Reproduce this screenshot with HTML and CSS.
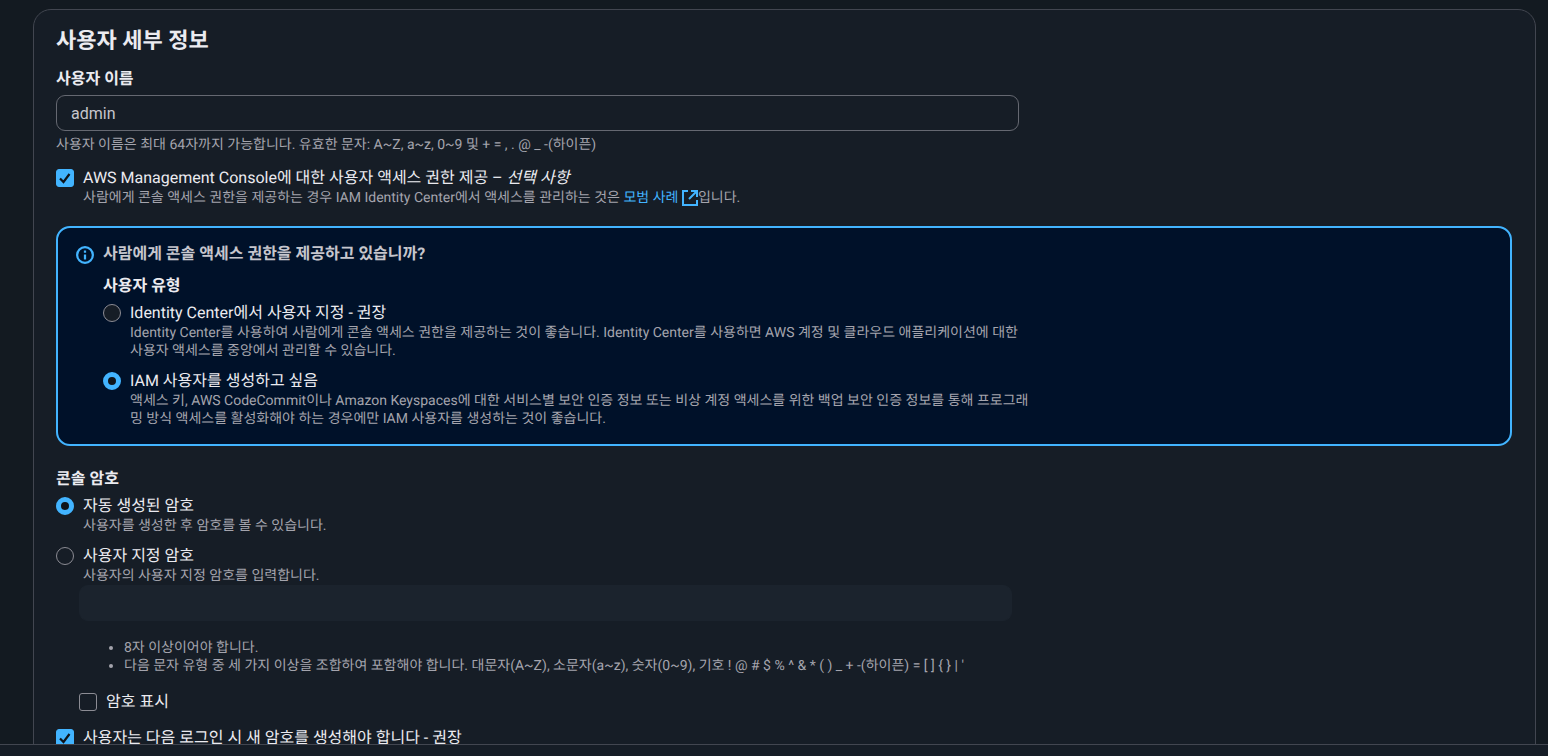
FILE: index.html
```html
<!DOCTYPE html>
<html lang="ko">
<head>
    <meta charset="UTF-8">
    <meta name="viewport" content="width=device-width, initial-scale=1.0">
    <title>사용자 세부 정보</title>
    <link rel="stylesheet" href="styles.css">
</head>
<body>
    <main class="content">
        <form class="card">
            <h2 class="card-title">사용자 세부 정보</h2>

            <div class="grid">
                <div class="field">
                    <label class="field-label" for="userName">사용자 이름</label>
                    <input class="text-input" type="text" id="userName" value="admin">
                    <p class="hint">사용자 이름은 최대 64자까지 가능합니다. 유효한 문자: A~Z, a~z, 0~9 및 + = , . @ _ -(하이픈)</p>
                </div>
            </div>

            <div class="option console-access">
                <input class="checkbox" type="checkbox" id="consoleAccess" checked>
                <div>
                    <label class="option-label" for="consoleAccess">AWS Management Console에 대한 사용자 액세스 권한 제공 – <em>선택 사항</em></label>
                    <p class="hint">사람에게 콘솔 액세스 권한을 제공하는 경우 IAM Identity Center에서 액세스를 관리하는 것은 <a class="link" href="#">모범 사례 <svg class="link-icon" viewBox="0 0 16 16" aria-hidden="true"><path d="M6 1H1v14h14v-5M9 1h6v6M15 1L7 9"/></svg></a>입니다.</p>
                </div>
            </div>

            <section class="alert">
                <svg class="alert-icon" viewBox="0 0 16 16" aria-hidden="true">
                    <circle cx="8" cy="8" r="7"/>
                    <path d="M8 12V7.5M8 6V4"/>
                </svg>
                <div class="alert-body">
                    <h3 class="alert-title">사람에게 콘솔 액세스 권한을 제공하고 있습니까?</h3>
                    <div class="grid alert-grid">
                        <fieldset class="options">
                            <legend class="field-label">사용자 유형</legend>
                            <div class="option">
                                <input class="radio" type="radio" name="userType" id="identityCenter">
                                <div>
                                    <label class="option-label" for="identityCenter">Identity Center에서 사용자 지정 - 권장</label>
                                    <p class="hint">Identity Center를 사용하여 사람에게 콘솔 액세스 권한을 제공하는 것이 좋습니다. Identity Center를 사용하면 AWS 계정 및 클라우드 애플리케이션에 대한 사용자 액세스를 중앙에서 관리할 수 있습니다.</p>
                                </div>
                            </div>
                            <div class="option">
                                <input class="radio" type="radio" name="userType" id="iamUser" checked>
                                <div>
                                    <label class="option-label" for="iamUser">IAM 사용자를 생성하고 싶음</label>
                                    <p class="hint">액세스 키, AWS CodeCommit이나 Amazon Keyspaces에 대한 서비스별 보안 인증 정보 또는 비상 계정 액세스를 위한 백업 보안 인증 정보를 통해 프로그래밍 방식 액세스를 활성화해야 하는 경우에만 IAM 사용자를 생성하는 것이 좋습니다.</p>
                                </div>
                            </div>
                        </fieldset>
                    </div>
                </div>
            </section>

            <div class="grid">
                <div>
                    <fieldset class="options">
                        <legend class="field-label">콘솔 암호</legend>
                        <div class="option">
                            <input class="radio" type="radio" name="password" id="autoPassword" checked>
                            <div>
                                <label class="option-label" for="autoPassword">자동 생성된 암호</label>
                                <p class="hint">사용자를 생성한 후 암호를 볼 수 있습니다.</p>
                            </div>
                        </div>
                        <div class="option">
                            <input class="radio" type="radio" name="password" id="customPassword">
                            <div>
                                <label class="option-label" for="customPassword">사용자 지정 암호</label>
                                <p class="hint">사용자의 사용자 지정 암호를 입력합니다.</p>
                            </div>
                        </div>
                    </fieldset>

                    <div class="custom-password">
                        <input class="text-input" type="password" aria-label="사용자 지정 암호" disabled>
                        <ul class="rules">
                            <li>8자 이상이어야 합니다.</li>
                            <li>다음 문자 유형 중 세 가지 이상을 조합하여 포함해야 합니다. 대문자(A~Z), 소문자(a~z), 숫자(0~9), 기호 ! @ # $ % ^ &amp; * ( ) _ + -(하이픈) = [ ] { } | '</li>
                        </ul>
                        <div class="option">
                            <input class="checkbox" type="checkbox" id="showPassword">
                            <label class="option-label" for="showPassword">암호 표시</label>
                        </div>
                    </div>

                    <div class="option reset-password">
                        <input class="checkbox" type="checkbox" id="resetPassword" checked>
                        <label class="option-label" for="resetPassword">사용자는 다음 로그인 시 새 암호를 생성해야 합니다 - 권장</label>
                    </div>
                </div>
            </div>
        </form>
    </main>
    <footer class="footer"></footer>
</body>
</html>
```
FILE: styles.css
```css
* {
    margin: 0;
    padding: 0;
    box-sizing: border-box;
}

body {
    display: flex;
    flex-direction: column;
    height: 100vh;
    overflow: hidden;
    background: #131a21;
    color: #ebebf0;
    font-family: Roboto, "Noto Sans CJK KR", sans-serif;
    font-size: 16px;
    line-height: 22px;
    text-rendering: geometricPrecision;
}

.content {
    flex: 1;
    min-height: 0;
    overflow: hidden;
    padding: 9px 12px 0 33px;
}

.card {
    padding: 18px 23px 24px 22px;
    background: #161d26;
    border: 1px solid #424650;
    border-radius: 18px;
}

.card-title {
    margin-bottom: 12px;
    font-size: 22px;
    line-height: 28px;
    font-weight: 700;
}

.grid {
    display: grid;
    grid-template-columns: 2fr 1fr;
    column-gap: 12px;
}

.field-label {
    display: block;
    font-weight: 700;
}

.text-input {
    display: block;
    width: 100%;
    height: 36px;
    padding: 0 14px;
    background: #161d26;
    border: 1px solid #656871;
    border-radius: 9px;
    color: #c6c6cd;
    font: inherit;
}

.text-input:disabled {
    background: #1b232d;
    border-color: #1b232d;
}

.field .text-input {
    margin: 5px 0;
}

.hint {
    color: #a4a4ad;
    font-size: 14px;
    line-height: 18px;
}

.option {
    display: flex;
    align-items: flex-start;
    gap: 9px;
}

.option-label {
    display: block;
}

.checkbox,
.radio {
    flex: none;
    width: 18px;
    height: 18px;
    margin-top: 2px;
    appearance: none;
    background: #161d26;
    border: 1px solid #8c8c94;
}

.checkbox {
    border-radius: 3px;
}

.radio {
    border-radius: 50%;
}

.checkbox:checked {
    background: #42b4ff url("data:image/svg+xml,%3Csvg xmlns='http://www.w3.org/2000/svg' viewBox='0 0 18 18'%3E%3Cpath d='M4 9.5l3.5 3.5L13.5 5' fill='none' stroke='%230f141a' stroke-width='2.2'/%3E%3C/svg%3E") center / 18px;
    border-color: #42b4ff;
}

.radio:checked {
    background: #0f141a;
    border: 5px solid #42b4ff;
}

.console-access {
    margin-top: 13px;
}

.link {
    color: #42b4ff;
    text-decoration: none;
}

.link-icon {
    width: 16px;
    height: 16px;
    vertical-align: -4px;
    fill: none;
    stroke: #42b4ff;
    stroke-width: 2;
}

.alert {
    display: flex;
    gap: 9px;
    margin: 19px 0 22px;
    padding: 15px 18px 16px;
    background: #001129;
    border: 2px solid #42b4ff;
    border-radius: 14px;
}

.alert-icon {
    flex: none;
    width: 18px;
    height: 18px;
    margin-top: 3px;
    fill: none;
    stroke: #42b4ff;
    stroke-width: 2;
}

.alert-body {
    flex: 1;
}

.alert-title {
    margin-bottom: 10px;
    color: #c6c6cd;
    font-size: 16px;
    font-weight: 700;
}

.alert-grid {
    grid-template-columns: 67fr 33fr;
    column-gap: 0;
}

.options {
    border: none;
    min-width: 0;
}

.options .option {
    margin-top: 5px;
}

.options .option + .option {
    margin-top: 10px;
}

.custom-password {
    padding: 0 7px 0 23px;
}

.rules {
    margin: 18px 0 16px;
    padding-left: 45px;
    color: #a4a4ad;
    font-size: 14px;
    line-height: 18px;
}

.reset-password {
    margin-top: 14px;
}

.footer {
    height: 12px;
    background: #161d26;
    border-top: 1px solid #424650;
}
```
